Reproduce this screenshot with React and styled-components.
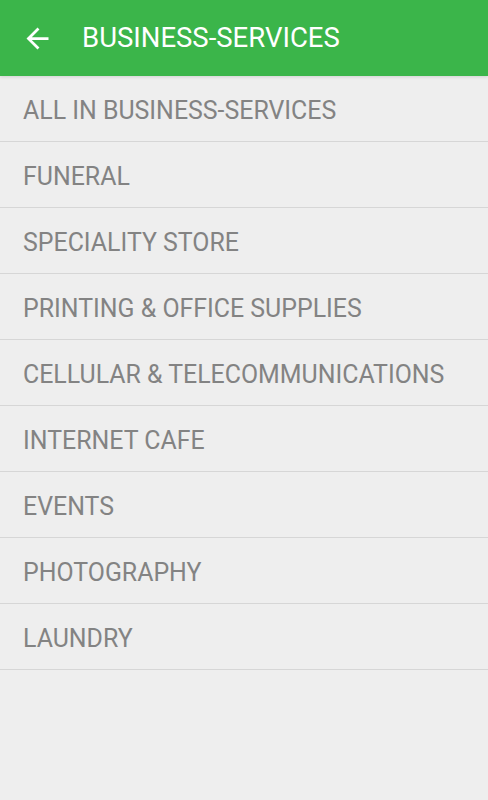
import React from "react";
import styled, { createGlobalStyle } from "styled-components";

const Global = createGlobalStyle`
  html, body { margin: 0; padding: 0; background: #eeeeee; }
  body { font-family: Roboto, "Noto Sans", sans-serif; }
`;

const Screen = styled.div`
  width: 488px;
  min-height: 800px;
  background: #eeeeee;
  display: flex;
  flex-direction: column;
`;

const Toolbar = styled.header`
  height: 76px;
  background: #3bb54a;
  display: flex;
  align-items: center;
  box-shadow: 0 1px 3px rgba(0,0,0,0.12);
`;

const BackButton = styled.button`
  width: 82px;
  height: 75px;
  padding: 0 0 0 21px;
  border: none;
  background: transparent;
  display: flex;
  align-items: center;
  cursor: pointer;
`;

const Title = styled.h1`
  margin: 0 0 1px;
  font-family: Roboto, sans-serif;
  font-weight: 400;
  font-size: 27.5px;
  color: #ffffff;
`;

const List = styled.ul`
  list-style: none;
  margin: 0;
  padding: 0;
`;

const Row = styled.li`
  height: 66px;
  box-sizing: border-box;
  border-bottom: 1px solid #d6d6d6;
  display: flex;
  align-items: center;
  padding: 3px 0 0 23px;
  font-family: Roboto, sans-serif;
  font-size: 24.9px;
  color: #838383;
`;

const items = [
  "ALL IN BUSINESS-SERVICES",
  "FUNERAL",
  "SPECIALITY STORE",
  "PRINTING & OFFICE SUPPLIES",
  "CELLULAR & TELECOMMUNICATIONS",
  "INTERNET CAFE",
  "EVENTS",
  "PHOTOGRAPHY",
  "LAUNDRY",
];

export default function App() {
  return (
    <Screen>
      <Global />
      <Toolbar>
        <BackButton aria-label="Back">
          <svg width="33" height="33" viewBox="0 0 24 24">
            <path d="M20 11H7.83l5.59-5.59L12 4l-8 8 8 8 1.41-1.41L7.83 13H20v-2z" fill="#fff" />
          </svg>
        </BackButton>
        <Title>BUSINESS-SERVICES</Title>
      </Toolbar>
      <List>
        {items.map((t) => (
          <Row key={t}>{t}</Row>
        ))}
      </List>
    </Screen>
  );
}
